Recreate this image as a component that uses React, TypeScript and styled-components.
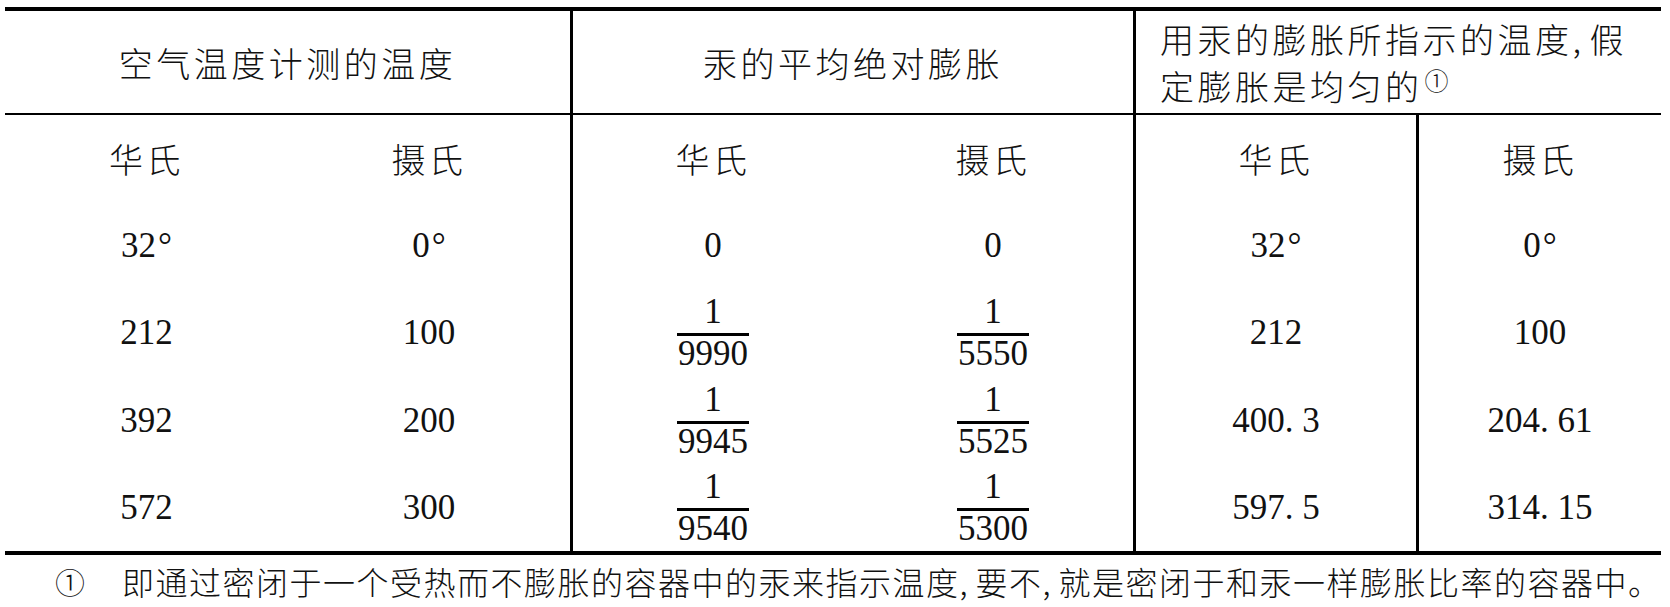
import styled, { createGlobalStyle } from 'styled-components';

const GlobalStyle = createGlobalStyle`
  html, body {
    margin: 0;
    padding: 0;
    background: #fff;
  }
  body {
    font-family: "Noto Sans CJK SC", "Noto Sans", sans-serif;
    font-weight: 300;
    color: #111;
  }
`;

const Page = styled.div`
  width: 1670px;
  height: 607px;
  padding: 7px 0 0 5px;
  box-sizing: border-box;
  overflow: hidden;
`;

const Table = styled.div`
  width: 1656px;
  display: grid;
  grid-template-columns: 283px 285px 280px 283px 283px 242px;
  grid-template-rows: 104px repeat(5, 87.2px);
  border-top: 4px solid #000;
  border-bottom: 4px solid #000;
`;

const Cell = styled.div<{ $span?: number; $rule?: boolean; $head?: boolean; $left?: boolean }>`
  grid-column: span ${(p) => p.$span ?? 1};
  box-sizing: border-box;
  display: flex;
  align-items: center;
  justify-content: ${(p) => (p.$left ? 'flex-start' : 'center')};
  padding-left: ${(p) => (p.$left ? '24px' : '0')};
  border-right: ${(p) => (p.$rule ? '3px solid #000' : 'none')};
  border-bottom: ${(p) => (p.$head ? '2px solid #000' : 'none')};
`;

const HeadText = styled.span`
  font-size: 34px;
  letter-spacing: 3.5px;
  line-height: 47px;
  white-space: nowrap;
`;

const Num = styled.span`
  font-family: "Liberation Serif", "Times New Roman", serif;
  font-weight: 400;
  font-size: 35px;
  line-height: 35px;
  white-space: nowrap;
`;

// the source typesets the decimal point on a half-width cell
const Dot = styled.span`
  display: inline-block;
  width: 0.5em;
`;

const Deg = styled.span`
  margin-left: 2px;
`;

const Frac = styled.span`
  display: inline-flex;
  flex-direction: column;
  align-items: stretch;
  text-align: center;
  font-family: "Liberation Serif", "Times New Roman", serif;
  font-weight: 400;
  font-size: 35px;
  line-height: 35px;
`;

const Numer = styled.span`
  margin-bottom: 4px;
`;

const Denom = styled.span`
  border-top: 3px solid #000;
  padding: 0 1px;
`;

const Comma = styled.span`
  display: inline-block;
  width: 0.5em;
`;

const Mark = styled.span`
  display: inline-block;
  vertical-align: top;
  margin: 6px 0 0 2px;
  font-size: 24px;
  line-height: 24px;
  letter-spacing: 0;
`;

const Footnote = styled.div`
  display: flex;
  align-items: center;
  margin-top: 6px;
  padding-left: 50px;
  height: 40px;
  white-space: nowrap;
`;

const FootMark = styled.span`
  width: 67px;
  font-size: 30px;
`;

const FootText = styled.span`
  font-size: 32px;
  letter-spacing: 1.5px;
`;

type Value = string | { den: string };

const rows: Value[][] = [
  ['32°', '0°', '0', '0', '32°', '0°'],
  ['212', '100', { den: '9990' }, { den: '5550' }, '212', '100'],
  ['392', '200', { den: '9945' }, { den: '5525' }, '400.3', '204.61'],
  ['572', '300', { den: '9540' }, { den: '5300' }, '597.5', '314.15'],
];

const units = ['华氏', '摄氏', '华氏', '摄氏', '华氏', '摄氏'];

// vertical rules after the two first column groups, and between the last two columns
const hasRule = (i: number) => i === 1 || i === 3 || i === 4;

const renderNumber = (v: string) => {
  if (v.endsWith('°')) {
    return (
      <>
        {v.slice(0, -1)}
        <Deg>°</Deg>
      </>
    );
  }
  const [int, dec] = v.split('.');
  if (dec === undefined) return v;
  return (
    <>
      {int}
      <Dot>.</Dot>
      {dec}
    </>
  );
};

export default function App() {
  return (
    <>
      <GlobalStyle />
      <Page>
        <Table>
          <Cell $span={2} $rule $head>
            <HeadText>空气温度计测的温度</HeadText>
          </Cell>
          <Cell $span={2} $rule $head>
            <HeadText>汞的平均绝对膨胀</HeadText>
          </Cell>
          <Cell $span={2} $head $left>
            <HeadText>
              用汞的膨胀所指示的温度<Comma>,</Comma>假
              <br />
              定膨胀是均匀的<Mark>①</Mark>
            </HeadText>
          </Cell>

          {units.map((u, i) => (
            <Cell key={`u${i}`} $rule={hasRule(i)}>
              <HeadText>{u}</HeadText>
            </Cell>
          ))}

          {rows.map((row, r) =>
            row.map((v, i) => (
              <Cell key={`${r}-${i}`} $rule={hasRule(i)}>
                {typeof v === 'string' ? (
                  <Num>{renderNumber(v)}</Num>
                ) : (
                  <Frac>
                    <Numer>1</Numer>
                    <Denom>{v.den}</Denom>
                  </Frac>
                )}
              </Cell>
            ))
          )}
        </Table>

        <Footnote>
          <FootMark>①</FootMark>
          <FootText>
            即通过密闭于一个受热而不膨胀的容器中的汞来指示温度<Comma>,</Comma>要不<Comma>,</Comma>就是密闭于和汞一样膨胀比率的容器中。
          </FootText>
        </Footnote>
      </Page>
    </>
  );
}
